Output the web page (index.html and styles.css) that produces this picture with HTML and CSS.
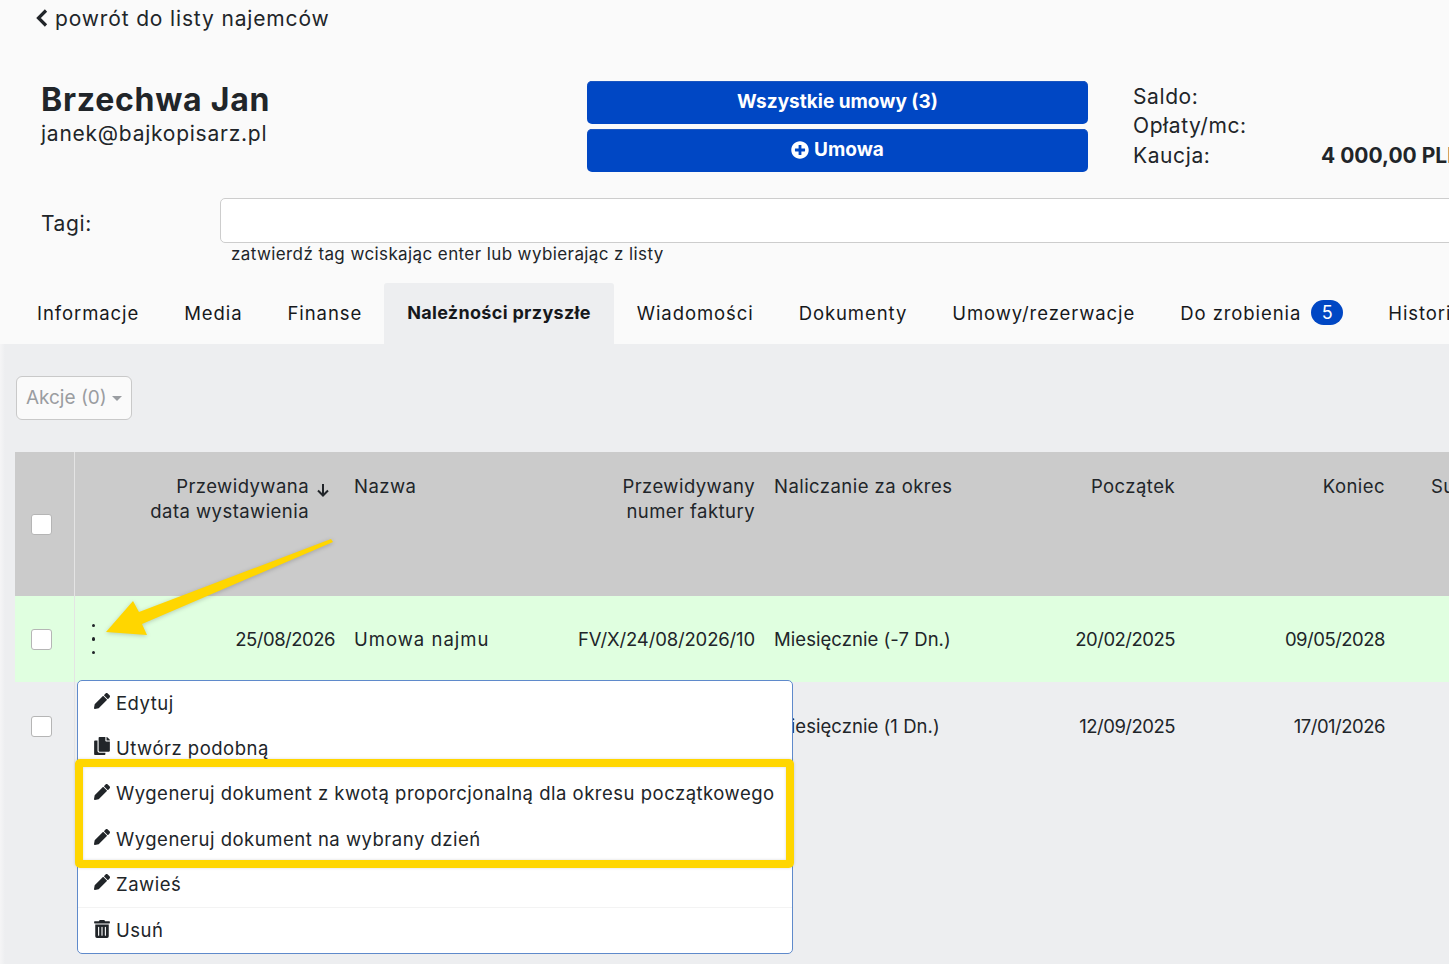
FILE: index.html
```html
<!DOCTYPE html>
<html lang="pl">

<head>
  <meta charset="UTF-8">
  <title>Brzechwa Jan</title>
  <link rel="stylesheet" href="styles.css">
</head>

<body>
  <div class="page">
    <header class="top">
      <a class="back" href="#">
        <svg class="back__icon" viewBox="0 0 12 18"><path d="M10 1.500 2.500 9l7.500 7.500" /></svg>
        powrót do listy najemców
      </a>

      <div class="head">
        <div class="person">
          <h1 class="person__name">Brzechwa Jan</h1>
          <div class="person__mail">janek@bajkopisarz.pl</div>
        </div>
        <div class="actions">
          <a class="btn" href="#">Wszystkie umowy (3)</a>
          <a class="btn" href="#">
            <svg class="btn__icon" viewBox="0 0 512 512"><path d="M256 8C119 8 8 119 8 256s111 248 248 248 248-111 248-248S393 8 256 8zm144 276c0 6.600-5.400 12-12 12h-92v92c0 6.600-5.400 12-12 12h-56c-6.600 0-12-5.400-12-12v-92h-92c-6.600 0-12-5.400-12-12v-56c0-6.600 5.400-12 12-12h92v-92c0-6.600 5.400-12 12-12h56c6.600 0 12 5.400 12 12v92h92c6.600 0 12 5.400 12 12v56z" /></svg>
            Umowa
          </a>
        </div>
        <dl class="summary">
          <dt>Saldo:</dt>
          <dd></dd>
          <dt>Opłaty/mc:</dt>
          <dd></dd>
          <dt>Kaucja:</dt>
          <dd>4 000,00 PLN</dd>
        </dl>
      </div>

      <div class="tags">
        <label class="tags__label" for="tag-input">Tagi:</label>
        <input class="tags__input" id="tag-input" type="text">
      </div>
      <div class="tags__hint">zatwierdź tag wciskając enter lub wybierając z listy</div>

      <nav class="tabs">
        <a class="tab" href="#">Informacje</a>
        <a class="tab" href="#">Media</a>
        <a class="tab" href="#">Finanse</a>
        <a class="tab tab--active" href="#">Należności przyszłe</a>
        <a class="tab" href="#">Wiadomości</a>
        <a class="tab" href="#">Dokumenty</a>
        <a class="tab" href="#">Umowy/rezerwacje</a>
        <a class="tab" href="#">Do zrobienia <span class="badge">5</span></a>
        <a class="tab" href="#">Historia</a>
      </nav>
    </header>

    <main class="content">
      <button class="dropdown-btn" type="button">Akcje (0) <span class="caret"></span></button>

      <table class="grid">
        <colgroup>
          <col class="col-check">
          <col class="col-menu">
          <col class="col-date">
          <col class="col-name">
          <col class="col-number">
          <col class="col-period">
          <col class="col-start">
          <col class="col-end">
          <col class="col-sum">
        </colgroup>
        <thead>
          <tr>
            <th class="cell-check"><input class="check" type="checkbox"></th>
            <th class="cell-menu"></th>
            <th class="right">
              <span class="sort">
                <span>Przewidywana<br>data wystawienia</span>
                <svg class="sort__icon" viewBox="0 0 14 14"><path d="M7 1v11M2 7.500 7 12.500l5-5" /></svg>
              </span>
            </th>
            <th>Nazwa</th>
            <th class="right">Przewidywany<br>numer faktury</th>
            <th>Naliczanie za okres</th>
            <th class="right">Początek</th>
            <th class="right">Koniec</th>
            <th class="cell-sum">Suma</th>
          </tr>
        </thead>
        <tbody>
          <tr class="row--current">
            <td class="cell-check"><input class="check" type="checkbox"></td>
            <td class="cell-menu"><span class="dots"><i></i><i></i><i></i></span></td>
            <td class="right num">25/08/2026</td>
            <td class="name">Umowa najmu</td>
            <td class="right invoice">FV/X/24/08/2026/10</td>
            <td class="period">Miesięcznie (-7 Dn.)</td>
            <td class="right num">20/02/2025</td>
            <td class="right num">09/05/2028</td>
            <td></td>
          </tr>
          <tr class="row--next">
            <td class="cell-check"><input class="check" type="checkbox"></td>
            <td class="cell-menu"></td>
            <td class="right num">12/09/2025</td>
            <td class="name">Umowa najmu</td>
            <td class="right invoice"></td>
            <td class="period">Miesięcznie (1 Dn.)</td>
            <td class="right num">12/09/2025</td>
            <td class="right num">17/01/2026</td>
            <td></td>
          </tr>
        </tbody>
      </table>
    </main>

    <ul class="menu">
      <li class="menu__item">
        <svg class="menu__icon" viewBox="0 0 512 512"><path d="M497.900 142.100l-46.100 46.100c-4.700 4.700-12.300 4.700-17 0l-111-111c-4.700-4.700-4.700-12.300 0-17l46.100-46.100c18.700-18.700 49.100-18.700 67.900 0l60.100 60.100c18.800 18.700 18.800 49.100 0 67.900zM284.200 99.800L21.600 362.400.4 483.900c-2.900 16.400 11.400 30.600 27.800 27.800l121.500-21.300 262.600-262.600c4.700-4.700 4.700-12.300 0-17l-111-111c-4.800-4.700-12.400-4.700-17.100 0z" /></svg>
        Edytuj
      </li>
      <li class="menu__item">
        <svg class="menu__icon" viewBox="0 0 448 512"><path d="M320 448v40c0 13.255-10.745 24-24 24H24c-13.255 0-24-10.745-24-24V120c0-13.255 10.745-24 24-24h72v296c0 30.879 25.121 56 56 56h168zm0-344V0H152c-13.255 0-24 10.745-24 24v368c0 13.255 10.745 24 24 24h272c13.255 0 24-10.745 24-24V128H344c-13.200 0-24-10.800-24-24zm120.971-31.029L375.029 7.029A24 24 0 0 0 358.059 0H352v96h96v-6.059a24 24 0 0 0-7.029-16.970z" /></svg>
        Utwórz podobną
      </li>
      <li class="menu__item">
        <svg class="menu__icon" viewBox="0 0 512 512"><path d="M497.900 142.100l-46.100 46.100c-4.700 4.700-12.300 4.700-17 0l-111-111c-4.700-4.700-4.700-12.300 0-17l46.100-46.100c18.700-18.700 49.100-18.700 67.900 0l60.100 60.100c18.800 18.700 18.800 49.100 0 67.900zM284.200 99.800L21.600 362.400.4 483.900c-2.900 16.400 11.400 30.600 27.800 27.800l121.500-21.300 262.600-262.600c4.700-4.700 4.700-12.300 0-17l-111-111c-4.800-4.700-12.400-4.700-17.100 0z" /></svg>
        Wygeneruj dokument z kwotą proporcjonalną dla okresu początkowego
      </li>
      <li class="menu__item">
        <svg class="menu__icon" viewBox="0 0 512 512"><path d="M497.900 142.100l-46.100 46.100c-4.700 4.700-12.300 4.700-17 0l-111-111c-4.700-4.700-4.700-12.300 0-17l46.100-46.100c18.700-18.700 49.100-18.700 67.900 0l60.100 60.100c18.800 18.700 18.800 49.100 0 67.900zM284.200 99.800L21.600 362.400.4 483.900c-2.900 16.400 11.400 30.600 27.800 27.800l121.500-21.300 262.600-262.600c4.700-4.700 4.700-12.300 0-17l-111-111c-4.800-4.700-12.400-4.700-17.100 0z" /></svg>
        Wygeneruj dokument na wybrany dzień
      </li>
      <li class="menu__item">
        <svg class="menu__icon" viewBox="0 0 512 512"><path d="M497.900 142.100l-46.100 46.100c-4.700 4.700-12.300 4.700-17 0l-111-111c-4.700-4.700-4.700-12.300 0-17l46.100-46.100c18.700-18.700 49.100-18.700 67.900 0l60.100 60.100c18.800 18.700 18.800 49.100 0 67.900zM284.200 99.800L21.600 362.400.4 483.900c-2.900 16.400 11.400 30.600 27.800 27.800l121.500-21.300 262.600-262.600c4.700-4.700 4.700-12.300 0-17l-111-111c-4.800-4.700-12.400-4.700-17.100 0z" /></svg>
        Zawieś
      </li>
      <li class="menu__divider"></li>
      <li class="menu__item">
        <svg class="menu__icon" viewBox="0 0 448 512"><path d="M32 464a48 48 0 0 0 48 48h288a48 48 0 0 0 48-48V128H32zm272-256a16 16 0 0 1 32 0v224a16 16 0 0 1-32 0zm-96 0a16 16 0 0 1 32 0v224a16 16 0 0 1-32 0zm-96 0a16 16 0 0 1 32 0v224a16 16 0 0 1-32 0zM432 32H312l-9.400-18.700A24 24 0 0 0 281.100 0H166.800a23.720 23.720 0 0 0-21.400 13.300L136 32H16A16 16 0 0 0 0 48v32a16 16 0 0 0 16 16h416a16 16 0 0 0 16-16V48a16 16 0 0 0-16-16z" /></svg>
        Usuń
      </li>
    </ul>

    <!-- annotations drawn over the screenshot -->
    <div class="mark"></div>
    <svg class="pointer" viewBox="0 0 240 110">
      <polygon points="6,102 33,71 39,82 231,9 233,12 42,94 47,105" />
    </svg>
  </div>
</body>

</html>
```

FILE: styles.css
```css
* {
  box-sizing: border-box;
}

body {
  margin: 0;
  background-color: #edeef0;
  color: #212529;
  font-family: "Inter", "Noto Sans", sans-serif;
}

.page {
  position: relative;
  width: 1449px;
  height: 964px;
  overflow: hidden;
}

.top {
  height: 344px;
  background-color: #fafafa;
}

.back {
  display: flex;
  align-items: center;
  gap: 7px;
  height: 36px;
  padding-left: 36px;
  color: #212529;
  font-size: 21px;
  letter-spacing: 0.85px;
  text-decoration: none;
}

.back__icon {
  width: 12px;
  height: 18px;
  fill: none;
  stroke: #212529;
  stroke-width: 3.200;
}

.head {
  display: flex;
  margin-top: 45px;
  padding-left: 41px;
}

.person {
  width: 546px;
  padding-top: 1px;
  flex: 0 0 auto;
}

.person__name {
  margin: 0;
  font-size: 32px;
  font-weight: 700;
  line-height: 36px;
  letter-spacing: 0.75px;
}

.person__mail {
  margin-top: 2px;
  font-size: 21px;
  line-height: 27px;
  letter-spacing: 0.75px;
}

.actions {
  display: flex;
  flex-direction: column;
  gap: 5px;
  width: 501px;
  flex: 0 0 auto;
}

.btn {
  display: flex;
  align-items: center;
  justify-content: center;
  gap: 5px;
  height: 43px;
  padding-bottom: 2px;
  border-radius: 5px;
  background-color: #0047c4;
  box-shadow: inset 0 1px 0 #1a55c0;
  color: #fff;
  font-size: 19px;
  font-weight: 700;
  text-decoration: none;
}

.btn__icon {
  width: 18px;
  height: 18px;
  fill: #fff;
}

.summary {
  display: grid;
  grid-template-columns: 188px 200px;
  grid-auto-rows: 29.300px;
  align-items: center;
  margin: 1px 0 0 45px;
  font-size: 21px;
  letter-spacing: 0.6px;
}

.summary dd {
  margin: 0;
  font-weight: 700;
  letter-spacing: 0;
  white-space: nowrap;
}

.tags {
  display: flex;
  align-items: center;
  margin-top: 26px;
  padding-left: 41px;
}

.tags__label {
  width: 179px;
  padding-top: 6px;
  font-size: 21px;
  letter-spacing: 0.6px;
  flex: 0 0 auto;
}

.tags__input {
  width: 1400px;
  height: 45px;
  border: 1px solid #cdcdcd;
  border-radius: 5px;
  background-color: #fff;
  flex: 0 0 auto;
}

.tags__hint {
  height: 40px;
  padding-left: 231px;
  font-size: 17px;
  line-height: 22px;
  letter-spacing: 0.4px;
}

.tabs {
  display: flex;
  height: 61px;
  padding-left: 14px;
  white-space: nowrap;
}

.tab {
  display: flex;
  align-items: center;
  gap: 10px;
  padding: 0 22px 2px 23px;
  color: #16181b;
  font-size: 18.500px;
  letter-spacing: 0.92px;
  text-decoration: none;
}

.tab--active {
  padding-right: 23px;
  border-radius: 3px 3px 0 0;
  background-color: #edeef0;
  font-weight: 700;
  font-size: 18px;
  letter-spacing: 0.32px;
}

.badge {
  display: flex;
  align-items: center;
  justify-content: center;
  width: 32px;
  height: 25px;
  border-radius: 13px;
  background-color: #0047c4;
  color: #fff;
  font-size: 18px;
  letter-spacing: 0;
}

.content {
  height: 620px;
  padding: 32px 0 0 15px;
  background-image: linear-gradient(90deg, #f5f5f6, #edeef0 5px);
}

.dropdown-btn {
  display: block;
  width: 116px;
  height: 44px;
  margin-left: 1px;
  padding: 0 0 2px;
  border: 1px solid #c9c9c9;
  border-radius: 6px;
  background-color: #fafafa;
  color: #9a9da1;
  font-family: inherit;
  font-size: 19px;
}

.caret {
  display: inline-block;
  border-top: 5px solid #9a9da1;
  border-right: 5px solid transparent;
  border-left: 5px solid transparent;
  vertical-align: 3px;
}

.grid {
  width: 1500px;
  margin-top: 32px;
  border-collapse: collapse;
  table-layout: fixed;
  font-size: 18.500px;
  letter-spacing: 0.45px;
}

.col-check { width: 59px; }
.col-menu { width: 51px; }
.col-date { width: 220px; }
.col-name { width: 220px; }
.col-number { width: 200px; }
.col-period { width: 240px; }
.col-start { width: 180px; }
.col-end { width: 210px; }
.col-sum { width: 120px; }

th,
td {
  padding: 0 10px 0 9px;
  text-align: left;
  white-space: nowrap;
}

th {
  height: 144px;
  padding-top: 22px;
  background-color: #cbcbcb;
  font-weight: 400;
  line-height: 25px;
  vertical-align: top;
}

tbody tr {
  height: 86px;
}

.row--current {
  background-color: #e0ffe0;
}

.row--next {
  height: 88px;
}

.right {
  text-align: right;
}

.num {
  letter-spacing: -0.5px;
}

.invoice {
  letter-spacing: -0.15px;
}

.name {
  letter-spacing: 1px;
}

.period {
  letter-spacing: 0.05px;
}

.cell-check {
  padding: 0 6px 0 0;
  border-right: 1px solid #e4e4e4;
  text-align: center;
}

th.cell-check {
  padding-top: 0;
  vertical-align: middle;
}

.cell-menu {
  padding-left: 17px;
}

.cell-sum {
  padding-left: 36px;
}

.check {
  display: block;
  width: 21px;
  height: 21px;
  margin: 0 auto;
  border: 1px solid #b5b5b5;
  border-radius: 3px;
  background-color: #fff;
  appearance: none;
}

.sort {
  display: inline-flex;
  align-items: flex-start;
  gap: 7px;
  margin-right: 5px;
}

.sort__icon {
  width: 14px;
  height: 14px;
  margin-top: 9px;
  fill: none;
  stroke: #212529;
  stroke-width: 2;
}

.dots {
  display: flex;
  flex-direction: column;
  gap: 10px;
  width: 4px;
}

.dots i {
  width: 3.500px;
  height: 3.500px;
  border-radius: 50%;
  background-color: #212529;
}

.menu {
  position: absolute;
  top: 680px;
  left: 77px;
  width: 716px;
  height: 274px;
  margin: 0;
  padding: 0;
  border: 1px solid #5f8acb;
  border-radius: 5px;
  background-color: #fff;
  list-style: none;
  font-size: 18.500px;
  letter-spacing: 0.5px;
}

.menu__item {
  display: flex;
  align-items: center;
  gap: 6px;
  height: 45.300px;
  padding: 0 0 2px 16px;
}

.menu__icon {
  width: 16px;
  height: 18px;
  margin-top: -3px;
  fill: #212529;
}

.menu__divider {
  height: 1px;
  background-color: #f3f3f3;
}

.mark {
  position: absolute;
  top: 759px;
  left: 75px;
  width: 719px;
  height: 109px;
  border: 8px solid #ffd600;
  border-radius: 5px;
  box-shadow: 0 0 3px rgba(0, 0, 0, 0.15), inset 0 0 3px rgba(0, 0, 0, 0.15);
}

.pointer {
  position: absolute;
  top: 530px;
  left: 100px;
  width: 240px;
  height: 110px;
  filter: drop-shadow(0 1px 2px rgba(0, 0, 0, 0.2));
}

.pointer polygon {
  fill: #ffd600;
}
```
